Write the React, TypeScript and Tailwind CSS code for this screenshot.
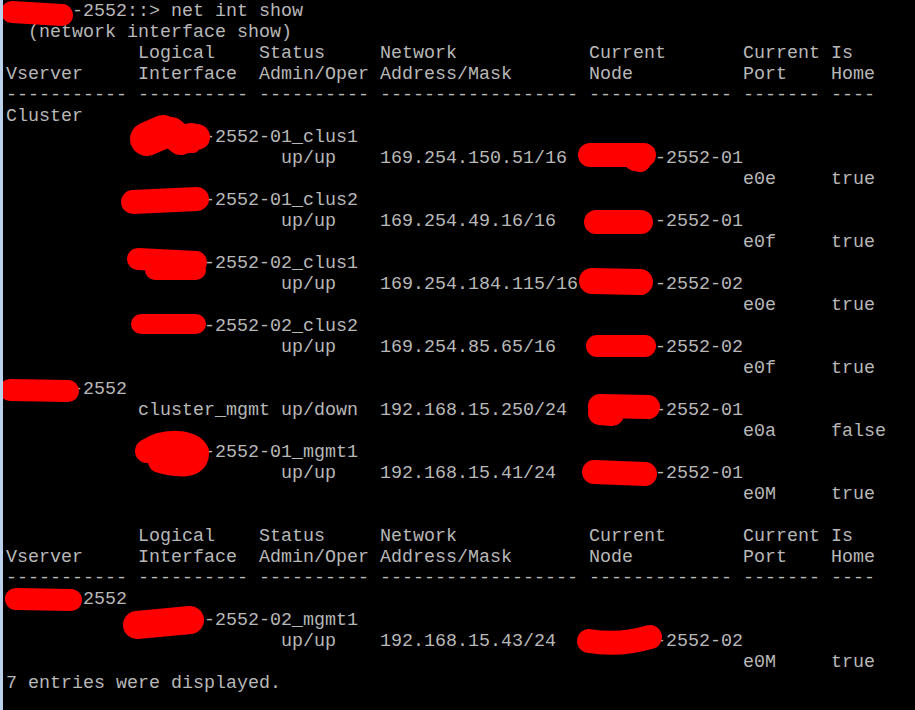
const R = (n: number) => " ".repeat(n);

const HEAD1 = "            Logical    Status     Network            Current       Current Is";
const HEAD2 = "Vserver     Interface  Admin/Oper Address/Mask       Node          Port    Home";
const DASH = "----------- ---------- ---------- ------------------ ------------- ------- ----";

const portLine = (port: string, home: string) =>
  R(67) + port.padEnd(8, " ") + home;

const lines: string[] = [
  R(6) + "-2552::> net int show",
  "  (network interface show)",
  HEAD1,
  HEAD2,
  DASH,
  "Cluster",
  R(12) + R(6) + "-2552-01_clus1",
  R(25) + "up/up    169.254.150.51/16  " + R(6) + "-2552-01",
  portLine("e0e", "true"),
  R(12) + R(6) + "-2552-01_clus2",
  R(25) + "up/up    169.254.49.16/16   " + R(6) + "-2552-01",
  portLine("e0f", "true"),
  R(12) + R(6) + "-2552-02_clus1",
  R(25) + "up/up    169.254.184.115/16 " + R(6) + "-2552-02",
  portLine("e0e", "true"),
  R(12) + R(6) + "-2552-02_clus2",
  R(25) + "up/up    169.254.85.65/16   " + R(6) + "-2552-02",
  portLine("e0f", "true"),
  R(6) + "-2552",
  R(12) + "cluster_mgmt up/down  192.168.15.250/24  " + R(6) + "-2552-01",
  portLine("e0a", "false"),
  R(12) + R(6) + "-2552-01_mgmt1",
  R(25) + "up/up    192.168.15.41/24   " + R(6) + "-2552-01",
  portLine("e0M", "true"),
  "",
  HEAD1,
  HEAD2,
  DASH,
  R(7) + "2552",
  R(12) + R(6) + "-2552-02_mgmt1",
  R(25) + "up/up    192.168.15.43/24   " + R(6) + "-2552-02",
  portLine("e0M", "true"),
  "7 entries were displayed.",
  "",
];

// redaction marks drawn over the text: thick round strokes
const strokes: { d: string; w: number }[] = [
  { d: "M12 12 L62 15", w: 22 },
  { d: "M147 139 L163 132", w: 34 },
  { d: "M171 132 L181 140", w: 30 },
  { d: "M191 136 L197 137", w: 26 },
  { d: "M189 146 L193 146", w: 14 },
  { d: "M133 202 L197 199", w: 24 },
  { d: "M138 259 L196 262", w: 22 },
  { d: "M155 270 L196 270", w: 20 },
  { d: "M141 324 L196 324", w: 20 },
  { d: "M10 390 L68 391", w: 22 },
  { d: "M147 451 C 165 439 192 441 197 452 C 198 464 186 468 160 461", w: 24 },
  { d: "M16 599 L71 600", w: 22 },
  { d: "M137 625 L190 620", w: 28 },
  { d: "M590 155 L644 155", w: 24 },
  { d: "M635 160 L640 161", w: 22 },
  { d: "M596 222 L641 222", w: 24 },
  { d: "M592 281 L640 282", w: 26 },
  { d: "M597 346 L645 346", w: 22 },
  { d: "M600 406 L648 407", w: 24 },
  { d: "M600 413 L612 414", w: 24 },
  { d: "M594 472 L645 474", w: 24 },
  { d: "M589 641 Q620 646 650 637", w: 24 },
];

export default function App() {
  return (
    <div className="relative h-[710px] w-full overflow-hidden bg-black border-l-[3px] border-[#b9d1ea]">
      <pre className="pl-[3px] pt-[1px] font-['Liberation_Mono','Courier_New',monospace] text-[18.33px] leading-[21px] text-[#b8b8b8]">
        {lines.map((l, i) => (
          <div key={i} className="h-[21px] whitespace-pre">
            {l}
          </div>
        ))}
      </pre>
      <svg
        className="pointer-events-none absolute left-[-3px] top-0"
        width="915"
        height="710"
        viewBox="0 0 915 710"
      >
        {strokes.map((s, i) => (
          <path
            key={i}
            d={s.d}
            fill="none"
            stroke="#ff0000"
            strokeWidth={s.w}
            strokeLinecap="round"
            strokeLinejoin="round"
          />
        ))}
      </svg>
    </div>
  );
}
